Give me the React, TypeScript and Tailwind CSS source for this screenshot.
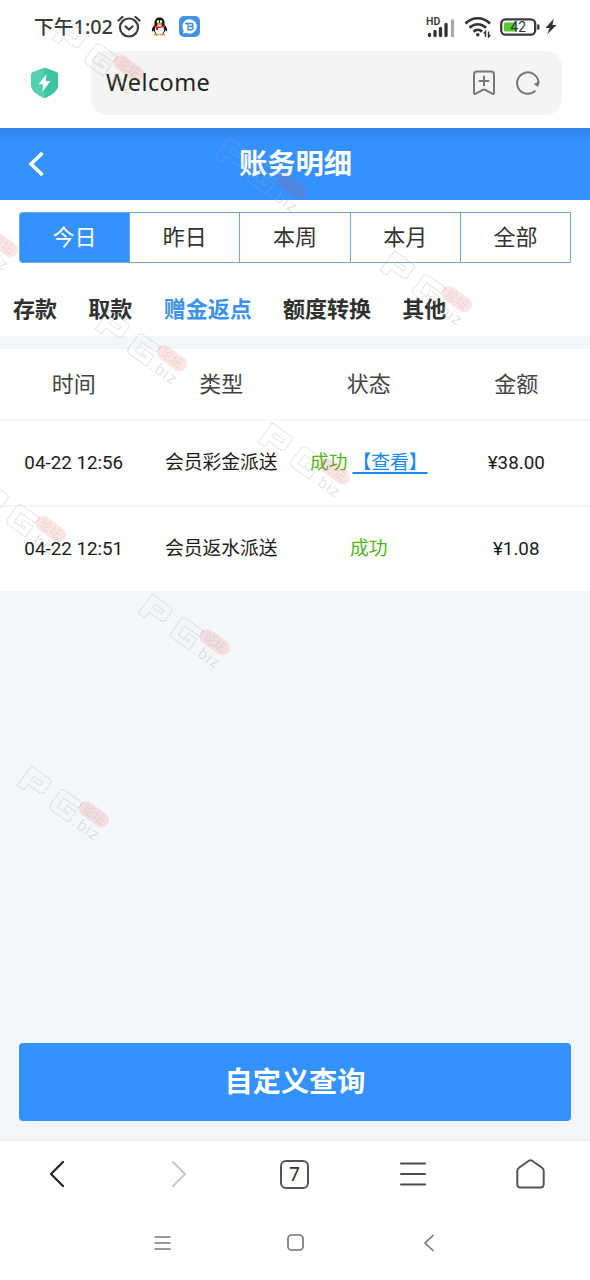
import React from "react";

const days = ["今日", "昨日", "本周", "本月", "全部"];
const categories = ["存款", "取款", "赠金返点", "额度转换", "其他"];
const columns = ["时间", "类型", "状态", "金额"];
const records = [
  { time: "04-22 12:56", type: "会员彩金派送", view: true, amount: "¥38.00" },
  { time: "04-22 12:51", type: "会员返水派送", view: false, amount: "¥1.08" },
];

// top left corner of every watermark
const marks = [
  [49, 19],
  [212, 137],
  [-77, 195],
  [377, 250],
  [92, 309],
  [255, 422],
  [-29, 480],
  [135, 593],
  [14, 765],
];

const StatusBar: React.FC = () => (
  <div className="flex h-[51px] items-center pt-[2px] pl-[34px] text-[#3a3a3a]">
    <span className="w-[79px] whitespace-nowrap font-['Noto_Sans','Noto_Sans_CJK_SC',sans-serif] text-[19.8px] leading-none font-medium">
      下午1:02
    </span>
    {/* Alarm */}
    <svg className="ml-[4px] h-6 w-6" viewBox="0 0 24 24" fill="none" stroke="#3d3d3d" strokeWidth="2.2" strokeLinecap="round">
      <circle cx="12" cy="12.5" r="9" />
      <path d="M8.500 11.500l3.500 3 3.500-3M1.500 5.500l4-3.500M22.500 5.500l-4-3.500" />
    </svg>
    {/* QQ */}
    <svg className="ml-[10px] h-[19px] w-[17px]" viewBox="0 0 17 19">
      <path d="M3.400 8C1.500 10 .4 12.500 1 14.200c.5.6 1.200-.2 1.800-1L14.400 13c.7 1.200 1.400 1.700 1.700 1 .5-1.700-.6-4-2.500-6z" fill="#151515" />
      <ellipse cx="8.500" cy="12" rx="6" ry="6" fill="#151515" />
      <ellipse cx="8.500" cy="12.800" rx="4.600" ry="4.900" fill="#fff" />
      <path d="M3.500 8V6C3.500 2.500 5.500.5 8.500.5s5 2 5 5.500v2z" fill="#151515" />
      <ellipse cx="7" cy="4.400" rx="1.100" ry="1.500" fill="#fff" />
      <ellipse cx="10" cy="4.400" rx="1.100" ry="1.500" fill="#fff" />
      <ellipse cx="8.500" cy="7" rx="3" ry="1" fill="#f5a623" />
      <path d="M3.200 8q5.300 3 10.600 0l.4 1.600q-3.700 1.600-7.200 1.300v2.200H4.900v-2.800q-1-.4-2.100-1z" fill="#d9201f" />
      <ellipse cx="5.200" cy="17.700" rx="2.500" ry=".9" fill="#e0982a" />
      <ellipse cx="11.800" cy="17.700" rx="2.500" ry=".9" fill="#e0982a" />
    </svg>
    {/* Chat app */}
    <svg className="ml-[11px] h-[21px] w-[21px]" viewBox="0 0 21 21">
      <rect width="21" height="21" rx="5" fill="#4492e4" />
      <path d="M10.500 3.200a7.200 7.200 0 1 1-3.400 13.500L4 17.600l.8-3A7.200 7.200 0 0 1 10.500 3.200z" fill="#fff" />
      <path d="M6 7.500h6.500a1.500 1.500 0 0 1 0 3H10m2.500 0a1.600 1.600 0 0 1 0 3.300H9V7.500" fill="none" stroke="#3b8be2" strokeWidth="1.400" />
    </svg>
    {/* Signal */}
    <svg className="ml-[226px] h-[22px] w-[31px]" viewBox="0 0 31 22">
      <text x="0" y="9" fontSize="10.500" fontWeight="600" fontFamily="Roboto, sans-serif" fill="#3a3a3a">HD</text>
      <path d="M3.500 19.500v-1M9 19.500V15.500M14.500 19.500v-7M20 19.500v-11" stroke="#333" strokeWidth="3.300" strokeLinecap="round" />
      <path d="M26.500 21V3.500" stroke="#aaa" strokeWidth="3.200" />
    </svg>
    {/* Wifi */}
    <svg className="ml-[7px] h-[22px] w-[28px]" viewBox="0 0 28 22" fill="none" stroke="#333" strokeWidth="2.700">
      <path d="M1.500 7.500c7-7 17.500-7 24.500 0M5.500 11.700c5-4.600 11.500-4.600 16.500 0M9.500 15.700c2.600-2.400 6-2.400 8.500 0" />
      <circle cx="13.800" cy="18.800" r="1.800" fill="#333" stroke="none" />
      <path d="M21.500 21v-5.500l-1.800 2M24.500 15.500V21l1.800-2" strokeWidth="1.400" />
    </svg>
    {/* Battery */}
    <svg className="ml-[7px] h-[18px] w-[41px]" viewBox="0 0 41 18">
      <rect x="2.200" y="1.300" width="34" height="15.400" rx="4.500" fill="#fff" stroke="#3a3a3a" strokeWidth="2.300" />
      <rect x="5" y="4.500" width="12" height="9" rx="1" fill="#55c82b" />
      <path d="M39.300 6.500v5" stroke="#3a3a3a" strokeWidth="2.300" />
      <text x="11.500" y="13.800" fontSize="13.800" fontFamily="Roboto, sans-serif" fill="#333">42</text>
    </svg>
    <svg className="ml-[5px] h-[17px] w-[12px]" viewBox="0 0 13 17">
      <path d="M9.500 0L.5 10H5L2.500 17 12.500 7H8z" fill="#333" />
    </svg>
  </div>
);

const AddressBar: React.FC = () => (
  <div className="flex h-[77px] items-start pl-[30px]">
    <svg className="mt-[16px] h-[32px] w-[29px]" viewBox="0 0 29 32">
      <path d="M12.800 1.300q1.700-.9 3.400 0l10 3.600q1.800.7 1.800 2.600V18c0 6-6 9.500-11.800 12.500q-1.700.8-3.400 0C7 27.500 1 24 1 18V7.500q0-1.900 1.800-2.600z" fill="#53d0ae" />
      <path d="M14.500.9q.9 0 1.700.4l10 3.600q1.800.7 1.800 2.600V18c0 6-6 9.500-11.800 12.500q-.8.4-1.700.4z" fill="#3cc5a3" />
      <path d="M16.500 7L8.500 17.300h4.700L12.300 25 20.500 14h-4.700z" fill="#fff" />
    </svg>
    <div className="ml-[32px] flex h-[64px] w-[471px] items-center rounded-[16px] bg-[#f4f4f4] pl-[15px]">
      <span className="w-[366px] font-['Noto_Sans',sans-serif] text-[23.5px] tracking-[0.4px] text-[#242424]">Welcome</span>
      <svg className="h-[26px] w-[24px]" viewBox="0 0 24 26" fill="none" stroke="#777" strokeWidth="2" strokeLinecap="round" strokeLinejoin="round">
        <path d="M5 1.500h14q3 0 3 3v18.200q0 2-1.800 1L13.500 20q-1.500-.8-3 0l-6.700 3.700q-1.800 1-1.800-1V4.500q0-3 3-3zM12 6.500v9M7.500 11h9" />
      </svg>
      <svg className="ml-[19px] h-[26px] w-[26px]" viewBox="0 0 26 26" fill="none" stroke="#777" strokeWidth="2" strokeLinecap="round">
        <path d="M19.800 21.200a10.700 10.700 0 1 1 3.700-8" />
        <path d="M18.500 14l4.700 3 1.300-5.500z" fill="#777" stroke="none" />
      </svg>
    </div>
  </div>
);

const BrowserNav: React.FC = () => (
  <div className="h-[141px] border-t-2 border-[#eceef0] bg-white">
    <div className="grid h-[66px] grid-cols-5 place-items-center">
      <svg className="mr-[4px] h-7 w-4" viewBox="0 0 16 28" fill="none" stroke="#292929" strokeWidth="2.300" strokeLinecap="round" strokeLinejoin="round">
        <path d="M14 2L2 14l12 12" />
      </svg>
      <svg className="ml-[3px] h-7 w-4" viewBox="0 0 16 28" fill="none" stroke="#c9c9c9" strokeWidth="2" strokeLinecap="round" strokeLinejoin="round">
        <path d="M2 2l12 12L2 26" />
      </svg>
      <div className="mr-px flex h-[29px] w-[29px] items-center justify-center rounded-[6px] border-2 border-[#555] font-['Noto_Sans',sans-serif] text-[19px] leading-none text-[#333]">
        7
      </div>
      <svg className="h-[26px] w-[26px]" viewBox="0 0 26 26" stroke="#4b4b4b" strokeWidth="2" strokeLinecap="round">
        <path d="M1 2.500h24M1 13h24M1 23.500h24" />
      </svg>
      <svg className="mr-px h-[30px] w-[29px]" viewBox="0 0 29 30" fill="none" stroke="#555" strokeWidth="2" strokeLinejoin="round">
        <path d="M12.800 1.800q1.700-1.200 3.400 0l9.800 7q1.700 1.300 1.700 3.200v13q0 3.600-3.600 3.600H4.900q-3.600 0-3.600-3.600V12q0-1.900 1.700-3.200z" />
      </svg>
    </div>
    {/* System keys */}
    <div className="flex h-[71px] items-center pl-[154px]">
      <svg className="h-4 w-[17px]" viewBox="0 0 17 16" stroke="#777" strokeWidth="1.600">
        <path d="M.5 2h16M.5 8h16M.5 14h16" />
      </svg>
      <svg className="ml-[116px] h-[17px] w-[17px]" viewBox="0 0 17 17" fill="none" stroke="#777" strokeWidth="1.700">
        <rect x="1" y="1" width="15" height="15" rx="3.500" />
      </svg>
      <svg className="ml-[119px] h-[18px] w-3" viewBox="0 0 12 18" fill="none" stroke="#777" strokeWidth="1.700">
        <path d="M10.500 1L2 9l8.500 8" />
      </svg>
    </div>
  </div>
);

const Watermark: React.FC<{ x: number; y: number }> = ({ x, y }) => (
  <svg className="absolute h-[80px] w-[100px] overflow-visible" style={{ left: x, top: y }} viewBox="0 0 100 80">
    <g transform="translate(18 0) rotate(36)" fontFamily="Liberation Sans, sans-serif">
      <g fill="none" stroke="#a9a9b0" strokeOpacity=".42" strokeWidth="1.200" strokeDasharray="1.500 1">
        <path d="M0 1h22q4 0 4 4v9q0 4-4 4H8v7H0zM8 8h11v4H8zM63 1H43q-5 0-5 5v14q0 5 5 5h20V12H52v5h5v2H45V8h18z" />
      </g>
      <rect x="62" y="-4" width="34" height="15" rx="7.500" fill="#f04848" fillOpacity=".14" />
      <text x="67" y="8" fontSize="12" fontFamily="Noto Sans CJK SC, sans-serif" fill="#777" fillOpacity=".16">论坛</text>
      <text x="66" y="25" fontSize="16" fill="#aaa" fillOpacity=".32" textLength="29">.biz</text>
    </g>
  </svg>
);

const App: React.FC = () => {
  return (
    <div className="relative flex h-[1280px] w-[590px] flex-col overflow-hidden bg-white font-[Roboto,'Noto_Sans_CJK_SC',sans-serif]">
      <StatusBar />
      <AddressBar />

      <header className="flex h-[72px] items-center bg-linear-to-b from-[#3384e8] to-[#3392ff] to-20% text-white">
        <svg className="ml-[28px] h-[26px] w-[17px]" viewBox="0 0 17 26" fill="none" stroke="#fff" strokeWidth="3.600">
          <path d="M14.500 2L3 13l11.500 11" />
        </svg>
        <h1 className="mr-[44px] flex-1 pt-[2px] text-center text-[28.3px] leading-none font-bold">账务明细</h1>
      </header>

      <div className="mx-[19px] mt-[12px] flex h-[51px] overflow-hidden rounded-l-[3px] border border-[#6fa9e0]">
        {days.map((day, i) => (
          <button
            key={day}
            className={
              i === 0
                ? "flex-1 bg-[#3392ff] text-[22px] leading-none text-white"
                : "flex-1 border-l border-[#6fa9e0] text-[22px] leading-none text-[#333]"
            }
          >
            {day}
          </button>
        ))}
      </div>

      <nav className="flex h-[73px] items-center gap-[31.300px] pt-[21px] pl-[13px] text-[22px] leading-none font-bold text-[#303030]">
        {categories.map((name) => (
          <span key={name} className={name === "赠金返点" ? "text-[#3b91ef]" : ""}>
            {name}
          </span>
        ))}
      </nav>

      <div className="h-[13px] bg-[#f4f7fa]" />

      <div className="grid h-[72px] grid-cols-4 items-center border-b-2 border-[#f3f5f7] pt-px text-center text-[22px] leading-none text-[#444]">
        {columns.map((c) => (
          <span key={c}>{c}</span>
        ))}
      </div>
      {records.map((r) => (
        <div
          key={r.time}
          className="grid h-[86px] grid-cols-4 items-center border-b-2 border-[#f3f5f7] text-center text-[18.8px] leading-none whitespace-nowrap text-[#1c1c1c] last-of-type:border-b-0"
        >
          <span>{r.time}</span>
          <span>{r.type}</span>
          <span className="text-[#51b81c]">
            成功
            {r.view && (
              <a className="ml-[5px] text-[#1989fa] underline decoration-[1.500px] underline-offset-[3px]">【查看】</a>
            )}
          </span>
          <span>{r.amount}</span>
        </div>
      ))}

      <div className="flex flex-1 flex-col justify-end bg-[#f3f7fa] px-[19px] pb-[18px]">
        <button className="h-[78px] rounded-[4px] bg-[#3392ff] pt-[2px] text-[28.2px] leading-none font-bold text-white">
          自定义查询
        </button>
      </div>

      <BrowserNav />

      <div className="pointer-events-none absolute inset-0">
        {marks.map(([x, y]) => (
          <Watermark key={`${x}-${y}`} x={x} y={y} />
        ))}
      </div>
    </div>
  );
};

export default App;
